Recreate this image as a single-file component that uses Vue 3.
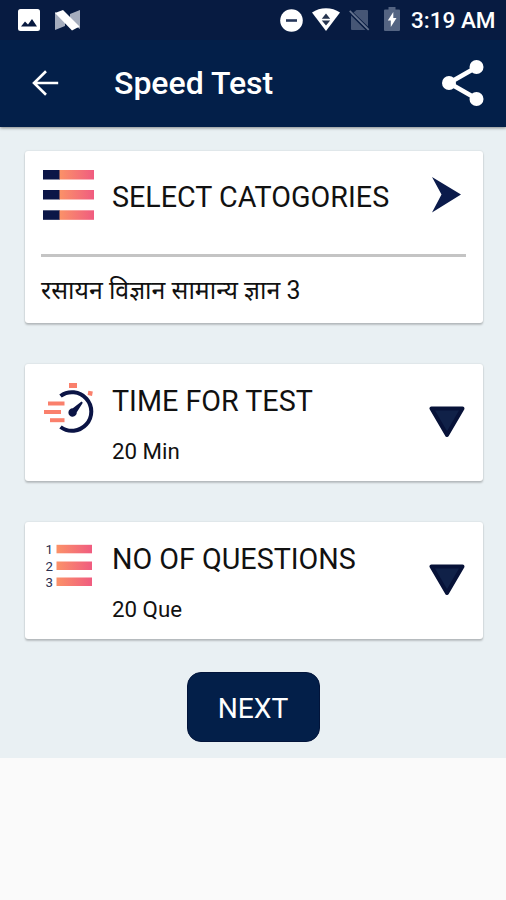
<script setup>
import { ref } from "vue";

const title = "Speed Test";
const category = ref("रसायन विज्ञान सामान्य ज्ञान 3");
const minutes = ref(20);
const questions = ref(20);
</script>

<template>
  <div class="page">
    <header class="header">
      <div class="status-bar">
        <svg class="image-icon" width="22" height="22" viewBox="0 0 22 22">
          <rect width="22" height="22" rx="2.5" fill="#fff" />
          <path d="M3 17.5l4-5 3 3 4-5.500 5 7.500z" fill="#08193f" />
        </svg>
        <svg class="n-icon" width="25" height="21" viewBox="0 0 25 21">
          <path d="M0 2l10 6v8L0 20z" fill="#a5adbd" />
          <path d="M15 4l10-4v19l-10-6z" fill="#a5adbd" />
          <path d="M0 3L8 0l16.500 16.500L17 20.500z" fill="#fff" />
        </svg>
        <span class="space"></span>
        <svg class="dnd-icon" width="23" height="23" viewBox="0 0 23 23">
          <circle cx="11.500" cy="11.500" r="11.300" fill="#fff" />
          <path d="M6 11.500h11" stroke="#26375a" stroke-width="2.600" />
        </svg>
        <svg class="wifi-icon" width="28" height="23" viewBox="0 0 28 23">
          <path d="M0 4.500C8-1.200 20-1.200 28 4.500L14 23z" fill="#fff" />
          <path d="M9.800 10.700L14 5.500l4.200 5.200zM9.800 12.500h8.400L14 17.500z" fill="#26344e" />
        </svg>
        <svg class="sim-icon" width="21" height="22" viewBox="0 0 21 22">
          <path d="M7.500 1H18a1 1 0 0 1 1 1v15.500L4.500 3.500zM2 6.500L16.500 21H3a1 1 0 0 1-1-1z" fill="#465675" />
          <path d="M3 4.500L18 19" stroke="#465675" stroke-width="1.500" />
          <path d="M.7 1.800l19 19" stroke="#65738e" stroke-width="1.700" />
        </svg>
        <svg class="battery-icon" width="16" height="24" viewBox="0 0 16 24">
          <path d="M4.500 0h7v2.500H15a1 1 0 0 1 1 1V23a1 1 0 0 1-1 1H1a1 1 0 0 1-1-1V3.500a1 1 0 0 1 1-1h3.500z" fill="#546482" />
          <path d="M9.300 5v6h3.200L6.800 20v-6.500H3.800z" fill="#fff" />
        </svg>
        <span class="clock">3:19 AM</span>
      </div>
      <div class="toolbar">
        <svg width="27" height="26" viewBox="0 0 27 26">
          <path d="M26.200 13H2.500M14 1.200L2 13l12 11.800" fill="none" stroke="#fff" stroke-width="2.600" />
        </svg>
        <h1>{{ title }}</h1>
        <span class="space"></span>
        <svg width="42" height="46" viewBox="0 0 42 46">
          <path d="M35 7L7 23l28 16" fill="none" stroke="#fff" stroke-width="4.600" />
          <g fill="#fff">
            <circle cx="34.500" cy="7" r="7" />
            <circle cx="7" cy="23" r="7" />
            <circle cx="34.500" cy="39" r="7" />
          </g>
        </svg>
      </div>
    </header>

    <main class="content">
      <svg width="0" height="0" class="defs">
        <defs>
          <linearGradient id="warm">
            <stop offset="0" stop-color="#fb9268" />
            <stop offset="1" stop-color="#f05c80" />
          </linearGradient>
        </defs>
      </svg>

      <section class="card categories">
        <div class="row">
          <svg class="icon" width="54" height="52" viewBox="0 0 54 52">
            <g v-for="y in [1, 21, 41.300]" :key="y">
              <rect x="2" :y="y" width="17" height="9.500" fill="#0b1647" />
              <rect x="18.500" :y="y" width="34.500" height="9.500" fill="url(#warm)" />
            </g>
          </svg>
          <h2>SELECT CATOGORIES</h2>
          <span class="space"></span>
          <svg class="arrow" width="29" height="36" viewBox="0 0 29 36">
            <path d="M0 0l29 17.500L0 35.500l9.500-18z" fill="#0b1b4b" />
          </svg>
        </div>
        <hr />
        <p class="category">{{ category }}</p>
      </section>

      <section class="card option">
        <svg class="icon" width="54" height="54" viewBox="0 0 54 54">
          <path d="M18 15A19.300 19.300 0 1 1 18 46" fill="none" stroke="#0b1445" stroke-width="4" transform="translate(1.500 -1)" />
          <path d="M40.500 19.500l1.300 1.300-6 9.500a4.200 4.200 0 1 1-4-4z" fill="#0b1445" />
          <g fill="#fa806c">
            <rect x="28" y="1" width="8" height="5" />
            <rect x="47" y="9" width="4.500" height="4.500" transform="rotate(10 49 11)" />
            <rect x="7" y="19.500" width="16.500" height="4" />
            <rect x="3" y="28" width="17" height="4" />
            <rect x="9" y="36.200" width="14.500" height="4" />
          </g>
        </svg>
        <div class="text">
          <h2>TIME FOR TEST</h2>
          <p>{{ minutes }} Min</p>
        </div>
        <svg class="triangle" width="36" height="32" viewBox="0 0 36 32">
          <path d="M2.500 2.500h31L18 29z" fill="#102148" stroke="#071238" stroke-width="4" stroke-linejoin="round" />
        </svg>
      </section>

      <section class="card option">
        <svg class="icon" width="54" height="54" viewBox="0 0 54 54">
          <g v-for="(y, i) in [4.800, 21.500, 37.500]" :key="y">
            <text x="4.500" :y="y + 9" class="digit">{{ i + 1 }}</text>
            <rect x="15.500" :y="y" width="35.500" height="8.500" fill="url(#warm)" />
          </g>
        </svg>
        <div class="text">
          <h2>NO OF QUESTIONS</h2>
          <p>{{ questions }} Que</p>
        </div>
        <svg class="triangle" width="36" height="32" viewBox="0 0 36 32">
          <path d="M2.500 2.500h31L18 29z" fill="#102148" stroke="#071238" stroke-width="4" stroke-linejoin="round" />
        </svg>
      </section>

      <button class="next">NEXT</button>
    </main>
  </div>
</template>

<style>
body {
  margin: 0;
  background: #fafafa;
}
</style>

<style scoped>
.page {
  width: 506px;
  height: 900px;
  overflow: hidden;
  background: #fafafa;
  color: #111;
  font-family: Roboto, "Noto Sans", sans-serif;
}

svg {
  display: block;
  flex-shrink: 0;
}

h1,
h2,
p {
  margin: 0;
  white-space: nowrap;
}

.space {
  flex: 1;
}

.header {
  position: relative;
  height: 127px;
  background: #031f49;
  box-shadow: 0 1px 3px rgba(0, 0, 0, 0.45);
}

.status-bar {
  display: flex;
  align-items: center;
  box-sizing: border-box;
  height: 40px;
  padding: 0 12px 0 18px;
  background: #071b41;
}

.n-icon {
  margin-left: 15px;
}

.wifi-icon {
  margin-left: 9px;
  margin-top: -2px;
}

.sim-icon {
  margin-left: 9px;
}

.battery-icon {
  margin-left: 14px;
  margin-top: -2px;
}

.clock {
  width: 83px;
  margin-left: 11px;
  color: #fff;
  font-size: 22.500px;
  font-weight: 500;
  white-space: nowrap;
}

.toolbar {
  display: flex;
  align-items: center;
  box-sizing: border-box;
  height: 87px;
  padding: 0 22px 2px 32px;
}

.toolbar h1 {
  margin-left: 55px;
  color: #fff;
  font-size: 32px;
  font-weight: 500;
}

.content {
  display: flex;
  flex-direction: column;
  box-sizing: border-box;
  height: 631px;
  padding: 24px 23px 0 25px;
  background: #e9f0f3;
}

.defs {
  height: 0;
}

.card {
  box-sizing: border-box;
  border-radius: 3px;
  background: #fff;
  box-shadow: 0 2px 2px rgba(0, 0, 0, 0.2), 0 0 2px rgba(0, 0, 0, 0.14);
}

.card h2 {
  padding-top: 2px;
  font-size: 28.700px;
  font-weight: 400;
  line-height: 34px;
}

.categories {
  height: 172px;
  padding: 18px 17px 0 16px;
}

.row {
  display: flex;
  align-items: center;
  height: 52px;
}

.row h2 {
  padding-top: 4px;
  margin-left: 17px;
}

.arrow {
  margin-right: 5px;
}

.categories hr {
  height: 3px;
  margin: 33px 0 0;
  border: 0;
  background: #c4c4c4;
}

.category {
  margin-top: 17px;
  font-size: 24.900px;
  line-height: 34px;
}

.option {
  display: flex;
  height: 117px;
  margin-top: 41px;
  padding: 18px 18px 0 16px;
}

.option .text {
  flex: 1;
  margin-left: 17px;
}

.option p {
  margin-top: 18px;
  font-size: 22.300px;
  line-height: 30px;
}

.triangle {
  margin-top: 24px;
}

.digit {
  fill: #2b2f50;
  font-family: Roboto, sans-serif;
  font-size: 13.300px;
}

.next {
  align-self: center;
  width: 133px;
  height: 70px;
  margin: 33px 2px 0 0;
  padding: 2px 0 0;
  border: 1px solid #02143a;
  border-radius: 14px;
  background: #031f49;
  color: #fff;
  font-family: Roboto, sans-serif;
  font-size: 28.200px;
}
</style>
